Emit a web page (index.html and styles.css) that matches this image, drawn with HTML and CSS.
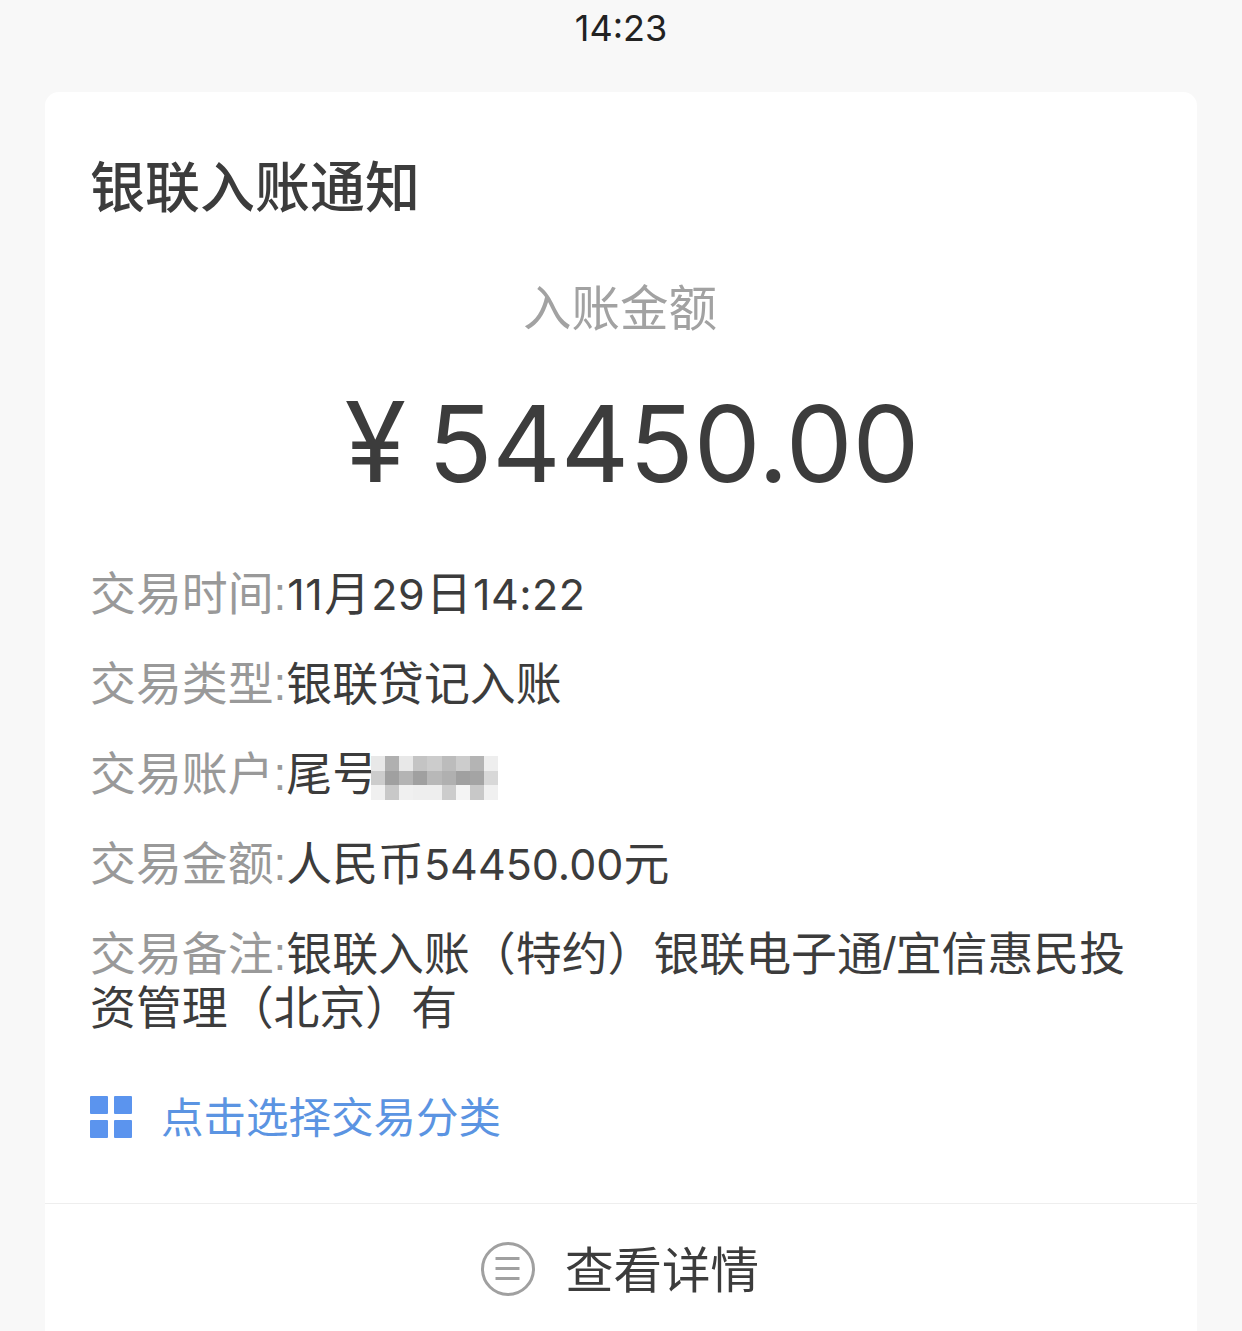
FILE: index.html
```html
<!DOCTYPE html>
<html lang="zh-CN">
<head>
  <meta charset="UTF-8">
  <title>银联入账通知</title>
  <link rel="stylesheet" href="styles.css">
</head>
<body>

  <div class="status-bar">14:23</div>

  <div class="card">
    <div class="card-body">
      <h2 class="card-title">银联入账通知</h2>

      <div class="amount-label">入账金额</div>
      <div class="amount"><span class="yen">¥</span> 54450.00</div>

      <div class="info-row"><span class="info-label">交易时间:</span><span class="num spaced">11</span>月<span class="num spaced">29</span>日<span class="num spaced">14:22</span></div>
      <div class="info-row"><span class="info-label">交易类型:</span>银联贷记入账</div>
      <div class="info-row"><span class="info-label">交易账户:</span>尾号<svg class="mosaic" width="127" height="44" viewBox="0 0 9 3" preserveAspectRatio="none" shape-rendering="crispEdges"><rect x="0" y="0" width="1" height="1" fill="#e8e8e8"/><rect x="1" y="0" width="1" height="1" fill="#b0b0b0"/><rect x="2" y="0" width="1" height="1" fill="#e8e8e8"/><rect x="3" y="0" width="1" height="1" fill="#c4c4c4"/><rect x="4" y="0" width="1" height="1" fill="#cccccc"/><rect x="5" y="0" width="1" height="1" fill="#bcbcbc"/><rect x="6" y="0" width="1" height="1" fill="#cccccc"/><rect x="7" y="0" width="1" height="1" fill="#b4b4b4"/><rect x="8" y="0" width="1" height="1" fill="#eeeeee"/><rect x="0" y="1" width="1" height="1" fill="#cccccc"/><rect x="1" y="1" width="1" height="1" fill="#a0a0a0"/><rect x="2" y="1" width="1" height="1" fill="#b4b4b4"/><rect x="3" y="1" width="1" height="1" fill="#a0a0a0"/><rect x="4" y="1" width="1" height="1" fill="#b8b8b8"/><rect x="5" y="1" width="1" height="1" fill="#b0b0b0"/><rect x="6" y="1" width="1" height="1" fill="#a0a0a0"/><rect x="7" y="1" width="1" height="1" fill="#a4a4a4"/><rect x="8" y="1" width="1" height="1" fill="#d8d8d8"/><rect x="0" y="2" width="1" height="1" fill="#f0f0f0"/><rect x="1" y="2" width="1" height="1" fill="#c8c8c8"/><rect x="2" y="2" width="1" height="1" fill="#f0f0f0"/><rect x="3" y="2" width="1" height="1" fill="#eeeeee"/><rect x="4" y="2" width="1" height="1" fill="#eeeeee"/><rect x="5" y="2" width="1" height="1" fill="#cccccc"/><rect x="6" y="2" width="1" height="1" fill="#f4f4f4"/><rect x="7" y="2" width="1" height="1" fill="#c8c8c8"/><rect x="8" y="2" width="1" height="1" fill="#f0f0f0"/></svg></div>
      <div class="info-row"><span class="info-label">交易金额:</span>人民币<span class="num">54450.00</span>元</div>
      <div class="info-row"><span class="info-label">交易备注:</span>银联入账（特约）银联电子通/宜信惠民投资管理（北京）有</div>

      <div class="category-link">
        <span class="grid-icon"><i></i><i></i><i></i><i></i></span>
        <span>点击选择交易分类</span>
      </div>
    </div>

    <div class="card-footer">
      <svg class="list-icon" width="56" height="56" viewBox="0 0 56 56" fill="none" stroke="#a0a0a0">
        <circle cx="28" cy="28" r="25.500" stroke-width="3"/>
        <path d="M15.500 17.500H39.500M15.500 27.500H39.500M15.500 37.500H39.500" stroke-width="3"/>
      </svg>
      <span class="footer-text">查看详情</span>
    </div>
  </div>

</body>
</html>
```

FILE: styles.css
```css
body {
  margin: 0;
  height: 1331px;
  overflow: hidden;
  background-color: #f8f8f8;
  font-family: "Liberation Sans", "Noto Sans CJK SC", sans-serif;
  color: #3c3c3c;
}

.status-bar {
  height: 92px;
  padding-top: 8px;
  box-sizing: border-box;
  text-align: center;
  font-family: Inter, "Liberation Sans", sans-serif;
  font-size: 36px;
  line-height: 40px;
  color: #222;
}

.card {
  margin: 0 45px;
  height: 1260px;
  background-color: #fff;
  border-radius: 14px;
}

.card-body {
  height: 1112px;
  padding: 0 47px 0 45px;
  box-sizing: border-box;
  border-bottom: 1px solid #eee;
}

.card-title {
  margin: 0;
  padding-top: 63px;
  font-size: 55px;
  line-height: 66px;
  font-weight: 500;
  color: #3c3c3c;
}

.amount-label {
  margin-top: 58px;
  text-align: center;
  font-size: 48.500px;
  line-height: 60px;
  color: #a2a2a2;
}

.amount {
  margin-top: 40px;
  margin-bottom: 58px;
  padding-left: 24px;
  text-align: center;
  font-family: Inter, "Liberation Sans", "Noto Sans CJK SC", sans-serif;
  font-size: 106px;
  line-height: 130px;
  word-spacing: -8px;
  color: #3c3c3c;
}

.yen {
  font-size: 112px;
  line-height: 1;
}

.info-row {
  margin-bottom: 36px;
  font-size: 45.900px;
  line-height: 54px;
  color: #3c3c3c;
}

.num {
  font-family: Inter, "Liberation Sans", sans-serif;
  font-size: 43px;
  line-height: 1;
}

.spaced {
  padding: 0 1px;
  letter-spacing: 0.500px;
}

.info-label {
  color: #999;
}

.mosaic {
  margin-left: -7px;
  vertical-align: middle;
}

.category-link {
  display: flex;
  align-items: center;
  gap: 29px;
  margin-top: 59px;
  font-size: 42.500px;
  line-height: 50px;
  color: #5b94e2;
}

.grid-icon {
  display: grid;
  grid-template-columns: 18px 18px;
  grid-template-rows: 18px 18px;
  gap: 6px;
  margin-top: -5px;
}

.grid-icon i {
  display: block;
  background-color: #5b94ee;
  border-radius: 1px;
}

.card-footer {
  display: flex;
  align-items: center;
  justify-content: center;
  gap: 29px;
  height: 130px;
  padding-right: 3px;
  font-size: 48.500px;
  line-height: 56px;
  color: #3c3c3c;
}

.footer-text {
  margin-top: 4px;
}
```
